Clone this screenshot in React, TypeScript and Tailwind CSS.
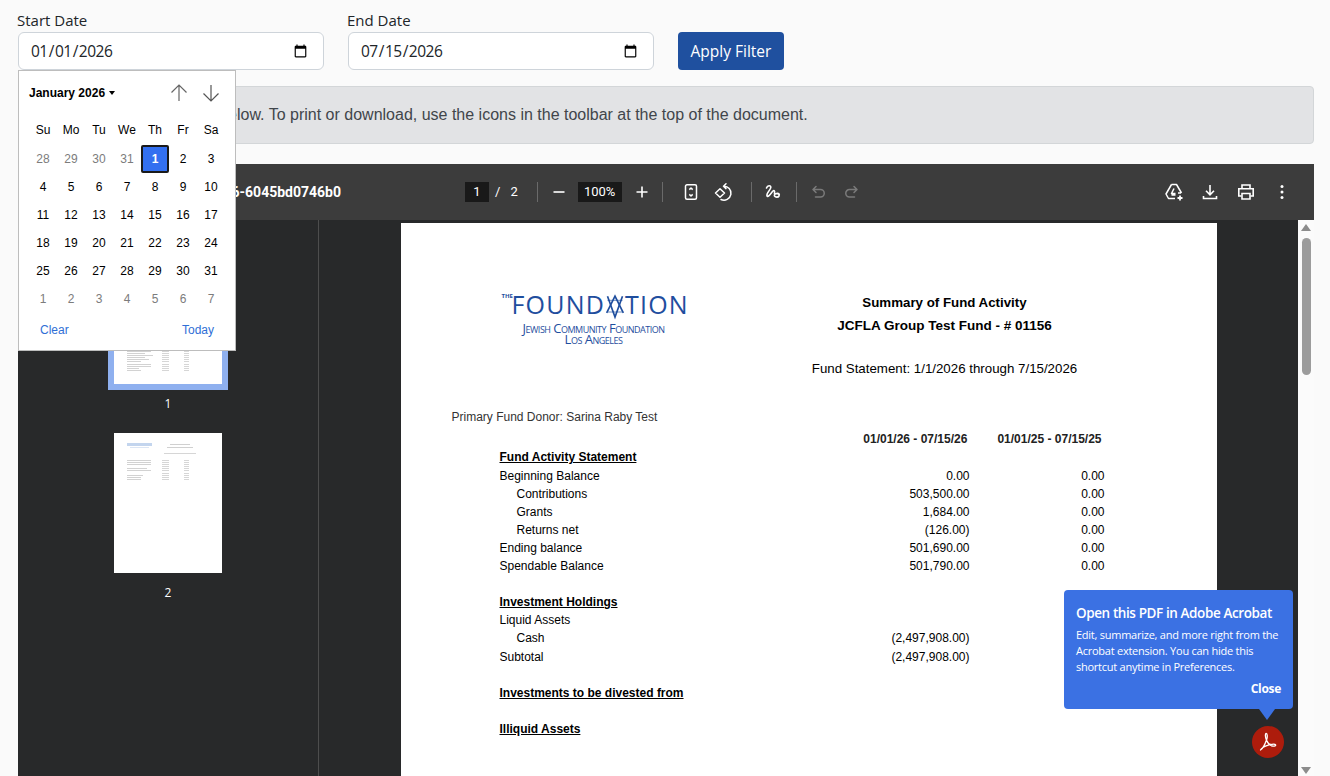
const weeks = [
  ["28", "29", "30", "31", "1", "2", "3"],
  ["4", "5", "6", "7", "8", "9", "10"],
  ["11", "12", "13", "14", "15", "16", "17"],
  ["18", "19", "20", "21", "22", "23", "24"],
  ["25", "26", "27", "28", "29", "30", "31"],
  ["1", "2", "3", "4", "5", "6", "7"],
];

const rows = [
  { label: "Fund Activity Statement", head: true },
  { label: "Beginning Balance", a: "0.00", b: "0.00" },
  { label: "Contributions", a: "503,500.00", b: "0.00", sub: true },
  { label: "Grants", a: "1,684.00", b: "0.00", sub: true },
  { label: "Returns net", a: "(126.00)", b: "0.00", sub: true },
  { label: "Ending balance", a: "501,690.00", b: "0.00" },
  { label: "Spendable Balance", a: "501,790.00", b: "0.00" },
  { label: "" },
  { label: "Investment Holdings", head: true },
  { label: "Liquid Assets" },
  { label: "Cash", a: "(2,497,908.00)", sub: true },
  { label: "Subtotal", a: "(2,497,908.00)" },
  { label: "" },
  { label: "Investments to be divested from", head: true },
  { label: "" },
  { label: "Illiquid Assets", head: true },
];

const ToolbarDivider = () => <div className="w-px h-5 bg-[#6a6a6a]" />;

const Calendar = () => (
  <div className="absolute left-0 top-[58px] z-20 w-[218px] h-[281px] bg-white border border-[#bdbdbd] font-['Liberation_Sans',sans-serif] text-black">
    <div className="flex items-center h-[44px] pl-[10px] pr-[14px]">
      <span className="text-xs font-bold">January 2026</span>
      <span className="ml-1 w-0 h-0 border-x-[3.5px] border-x-transparent border-t-[4px] border-t-black" />
      <svg viewBox="0 0 20 20" className="w-5 h-5 ml-auto text-[#666]" fill="none" stroke="currentColor" strokeWidth="1.2">
        <path d="M10 18V2M2.5 9.5 10 2l7.5 7.5" />
      </svg>
      <svg viewBox="0 0 20 20" className="w-5 h-5 ml-3 text-[#555]" fill="none" stroke="currentColor" strokeWidth="1.2">
        <path d="M10 2v16M2.5 10.5 10 18l7.5-7.5" />
      </svg>
    </div>
    <div className="grid grid-cols-7 w-[196px] ml-[10px] text-xs text-center">
      {["Su", "Mo", "Tu", "We", "Th", "Fr", "Sa"].map((d) => (
        <div key={d} className="h-[30px] flex items-center justify-center">
          {d}
        </div>
      ))}
      {weeks.map((week, w) =>
        week.map((d, i) => {
          const muted = (w === 0 && i < 4) || w === 5;
          const selected = w === 0 && i === 4;
          return (
            <div
              key={w + "-" + i}
              className={
                "h-[28px] flex items-center justify-center " +
                (selected
                  ? "bg-[#3370f0] border-2 border-[#1a1a1a] rounded-[2px] text-white font-bold"
                  : muted
                    ? "text-[#7c7c7c]"
                    : "")
              }
            >
              {d}
            </div>
          );
        }),
      )}
    </div>
    <div className="flex justify-between px-[21px] mt-[9px] text-xs text-[#2f6fd6]">
      <span>Clear</span>
      <span>Today</span>
    </div>
  </div>
);

const ThumbRow = ({ w = 26 }: { w?: number }) => (
  <div className="flex h-[1px] mb-[1.1px] ml-[13px]">
    <div style={{ width: w }} className="bg-[#d2d2d2]" />
    <div style={{ marginLeft: 35 - w }} className="w-[7px] bg-[#d6d6d6]" />
    <div className="ml-[15px] w-[5px] bg-[#d6d6d6]" />
  </div>
);

const Sidebar = () => (
  <div className="w-[301px] shrink-0 border-r border-[#4d4d4d] flex flex-col items-center pt-[18px] text-xs text-white">
    <div className="border-[6px] border-[#8fb0ef]">
      <div className="w-[108px] h-[140px] bg-white pt-[107px]">
        {[24, 18, 26, 18, 22, 14, 24, 24, 12, 14].map((w, i) => (
          <ThumbRow key={i} w={w} />
        ))}
      </div>
    </div>
    <div className="h-[27px] flex items-center">1</div>
    <div className="mt-[10px] border-[6px] border-transparent">
      <div className="w-[108px] h-[140px] bg-white pt-[10px]">
        <div className="flex ml-[13px]">
          <div className="w-[25px]">
            <div className="h-[3px] bg-[#c3d5ee]" />
            <div className="h-[1px] mt-[1px] mx-[3px] bg-[#dbe5f4]" />
          </div>
          <div className="ml-[15px] w-[26px] mt-[1px]">
            <div className="h-[1px] mx-[3px] bg-[#d0d0d0]" />
            <div className="h-[1px] mt-[2px] bg-[#d0d0d0]" />
            <div className="h-[1px] mt-[5px] -mr-[3px] -ml-[3px] bg-[#d6d6d6]" />
          </div>
        </div>
        <div className="mt-[6px]">
          {[24, 24, 24, 0, 20, 24, 0, 16, 14, 14].map((w, i) => (
            <ThumbRow key={i} w={w} />
          ))}
        </div>
      </div>
    </div>
    <div className="h-[27px] flex items-center">2</div>
  </div>
);

const Statement = () => (
  <div className="w-[816px] h-[640px] shrink-0 bg-white mt-[3px] pt-[70px] font-['Liberation_Sans',sans-serif] text-black">
    <div className="flex pl-[100px]">
      <div className="w-[186px] text-[#1f4e9e] font-['Open_Sans',sans-serif]">
        <div className="relative flex items-center h-[26px] -mt-[2px] text-[25px] leading-none tracking-[1.2px]">
          <span className="absolute left-[1px] top-[2px] text-[6px] font-bold tracking-normal">THE</span>
          <span className="ml-[11px]">FOUND</span>
          <svg viewBox="0 0 24 28" className="w-[20px] h-[26px] shrink-0 mt-[5px]" fill="none" stroke="currentColor" strokeWidth="2">
            <path d="M3 1 12 26 21 1" />
            <path d="M2 21 12 1l10 20" />
            <path d="M3 6h18M3 20h18" strokeWidth="0.8" />
          </svg>
          <span>TION</span>
        </div>
        <div className="text-center text-[13px] leading-[12px] mt-[5px] tracking-[-0.5px] whitespace-nowrap [font-variant:small-caps]">Jewish Community Foundation</div>
        <div className="text-center text-[13px] leading-[11px] tracking-[-0.5px] [font-variant:small-caps]">Los Angeles</div>
      </div>
      <div className="ml-[124px] pt-[1px] w-[268px] text-center">
        <div className="font-bold h-[23px] leading-[18px] text-[13.3px]">Summary of Fund Activity</div>
        <div className="font-bold h-[23px] leading-[18px] text-[13.5px]">JCFLA Group Test Fund - # 01156</div>
        <div className="mt-[20px] leading-[18px] text-[13.3px] whitespace-nowrap">Fund Statement: 1/1/2026 through 7/15/2026</div>
      </div>
    </div>
    <div className="ml-[51px] mt-[30px] text-xs leading-[18px] text-[#333]">Primary Fund Donor: Sarina Raby Test</div>
    <div className="ml-[99px] w-[605px] text-xs mt-[3.4px]">
      <div className="flex justify-end font-bold leading-[20px] text-[#222] h-[19px] pr-[3px]">
        <span>01/01/26 - 07/15/26</span>
        <span className="ml-[30px]">01/01/25 - 07/15/25</span>
      </div>
      {rows.map((r, i) => (
        <div key={i} className="flex h-[18.115px] leading-[18px]">
          <div className={"flex-1 " + (r.sub ? "pl-[17px] " : "") + (r.head ? "font-bold underline" : "")}>{r.label}</div>
          <div className="w-[135px] text-right">{r.a}</div>
          <div className="w-[135px] text-right">{r.b}</div>
        </div>
      ))}
    </div>
  </div>
);

const PdfToolbar = () => (
  <div className="h-14 shrink-0 bg-[#3c3c3c] flex items-center text-white font-['Roboto',sans-serif] text-[13px]">
    <div className="w-[447px] text-sm font-bold text-right pr-[124px] whitespace-nowrap">6-6045bd0746b0</div>
    <div className="w-6 h-5 bg-[#191919] flex items-center justify-center">1</div>
    <span className="ml-[6px]">/</span>
    <span className="ml-[10px]">2</span>
    <div className="ml-[19px]"><ToolbarDivider /></div>
    <svg viewBox="0 0 20 20" className="ml-[11px] w-5 h-5" fill="none" stroke="currentColor" strokeWidth="1.6"><path d="M4.5 10h11" /></svg>
    <div className="ml-[9px] w-11 h-5 bg-[#191919] flex items-center justify-center">100%</div>
    <svg viewBox="0 0 20 20" className="ml-[10px] w-5 h-5" fill="none" stroke="currentColor" strokeWidth="1.6"><path d="M4.5 10h11M10 4.5v11" /></svg>
    <div className="ml-[10px]"><ToolbarDivider /></div>
    <svg viewBox="0 0 20 20" className="ml-[18px] w-5 h-5" fill="none" stroke="currentColor" strokeWidth="1.5" strokeLinejoin="round">
      <rect x="4.5" y="2.8" width="11" height="14.4" rx="1.5" />
      <path d="M8.3 7.6 10 6l1.7 1.6M8.3 12.4 10 14l1.7-1.6" />
    </svg>
    <svg viewBox="0 0 20 20" className="ml-[12px] w-5 h-5" fill="none" stroke="currentColor" strokeWidth="1.5" strokeLinejoin="round" strokeLinecap="round">
      <path d="M2.5 11 7 6.800 11.500 11 7 15.200z" />
      <path d="M10.500 4.200a7 7 0 1 1-2.500 13.300M13 1.800l-2.500 2.400 2.500 2.400" />
    </svg>
    <div className="ml-[18px]"><ToolbarDivider /></div>
    <svg viewBox="0 0 20 20" className="ml-[11px] w-5 h-5" fill="none" stroke="currentColor" strokeWidth="1.6" strokeLinejoin="round" strokeLinecap="round">
      <path d="M3.500 6c1-3 4.500-3 4.300-.5-.2 2.500-4.800 5.500-3.800 8.500 1 2 4-3 6-5 1.200-1 2 0 1.500 2-.3 1.500 1 1.300 2 .5 1.700-.8 3.500.5 2.500 2.500-.8 1.500-3.500 1.500-4.500 0-.5-1 .5-2.500 2-2.500 1 0 2 .5 2.500 1" />
    </svg>
    <div className="ml-[13px]"><ToolbarDivider /></div>
    <svg viewBox="0 0 20 20" className="ml-[12px] w-5 h-5 text-[#7a7a7a]" fill="none" stroke="currentColor" strokeWidth="1.5" strokeLinejoin="round" strokeLinecap="round">
      <path d="M7 4.500 4 7.500l3 3M4.500 7.500h7a3.500 3.500 0 0 1 0 7.500H6.500" />
    </svg>
    <svg viewBox="0 0 20 20" className="ml-[12px] w-5 h-5 text-[#7a7a7a]" fill="none" stroke="currentColor" strokeWidth="1.5" strokeLinejoin="round" strokeLinecap="round">
      <path d="M13 4.500l3 3-3 3M15.500 7.500h-7a3.500 3.500 0 0 0 0 7.500h5" />
    </svg>
    <div className="ml-auto flex items-center gap-4 pr-[22px]">
      <svg viewBox="0 0 20 20" className="w-5 h-5" fill="none" stroke="currentColor" strokeWidth="1.5" strokeLinejoin="round">
        <path d="M7.500 2.500h5l5 8.500M7.500 2.500 2 12l2.500 4.500H11M17 11h-3" />
        <path d="M7.500 13h4M10 6.500 7.500 11.500h4" />
        <path d="M16 13.500v5M13.500 16h5" strokeWidth="1.8" />
      </svg>
      <svg viewBox="0 0 20 20" className="w-5 h-5" fill="none" stroke="currentColor" strokeWidth="1.600">
        <path d="M10 3v9.500M6 8.800l4 4 4-4M3.500 14v2.500h13V14" />
      </svg>
      <svg viewBox="0 0 20 20" className="w-5 h-5" fill="none" stroke="currentColor" strokeWidth="1.600">
        <path d="M6 6.500V3h8v3.500M5.500 14H2.800V6.800h14.400V14h-2.700" />
        <path d="M6 11.500h8v5.500H6z" />
      </svg>
      <svg viewBox="0 0 20 20" className="w-5 h-5" fill="currentColor">
        <circle cx="10" cy="4.500" r="1.500" />
        <circle cx="10" cy="10" r="1.500" />
        <circle cx="10" cy="15.500" r="1.500" />
      </svg>
    </div>
  </div>
);

const Scrollbar = () => (
  <div className="w-[16px] shrink-0 bg-[#fbfbfb] flex flex-col items-center pt-[4px]">
    <span className="w-0 h-0 border-x-[5px] border-x-transparent border-b-[7px] border-b-[#8c8c8c]" />
    <div className="w-[9px] h-[137px] mt-[7px] bg-[#9c9c9c] rounded-full" />
    <span className="mt-auto mb-[2px] w-0 h-0 border-x-[5px] border-x-transparent border-t-[7px] border-t-[#8c8c8c]" />
  </div>
);

const AcrobatPrompt = () => (
  <div className="absolute right-[37px] top-[590px] z-10 flex flex-col items-center font-['Open_Sans',sans-serif] text-white">
    <div className="relative w-[229px] h-[119px] rounded bg-[#3b71e3] pl-3 pr-3 pt-[14px]">
      <div className="text-[13.5px] font-semibold leading-[18px] tracking-[-0.4px] whitespace-nowrap">Open this PDF in Adobe Acrobat</div>
      <div className="text-[11px] leading-4 mt-[5px] tracking-[-0.25px] whitespace-nowrap">
        Edit, summarize, and more right from the
        <br />
        Acrobat extension. You can hide this
        <br />
        shortcut anytime in Preferences.
      </div>
      <div className="text-right text-xs font-bold mt-[6px] tracking-[-0.3px]">Close</div>
      <span className="absolute left-[195px] top-full w-0 h-0 border-x-[8px] border-x-transparent border-t-[11px] border-t-[#3b71e3]" />
    </div>
    <div className="self-end mr-[9px] mt-[17px] w-8 h-8 rounded-full bg-[#ad1c0c] flex items-center justify-center">
      <svg viewBox="0 0 24 24" className="w-6 h-6" fill="none" stroke="#fff" strokeWidth="1.300" strokeLinejoin="round">
        <path d="M4.500 20c1.800-1 4.300-5.200 6.200-10.500.9-2.500.7-6-.5-6s-1 3.700.3 6.800c1.300 3 3.800 5.300 6.300 5.800 1.800.3 3.200-.3 2.800-1.200-.5-1-4-.8-7.300.2-3.400 1-6.800 3-7.800 4.900z" />
      </svg>
    </div>
  </div>
);

const DateField = ({ label, value }: { label: string; value: string }) => (
  <div className="w-[306px]">
    <label className="block text-[15px] leading-[24px] h-[24px] -ml-[1px] -mt-[4px] text-[#212529]">{label}</label>
    <input
      type="date"
      defaultValue={value}
      className="w-full h-[38px] bg-white border border-[#ced4da] rounded-md pl-[11px] pr-[13px] pt-[2px] text-[15.500px] tracking-[-0.5px] text-[#212529]"
    />
  </div>
);

export default function App() {
  return (
    <div className="relative h-[776px] overflow-hidden bg-[#fafafa] pl-[18px] pr-4 pt-3 font-['Open_Sans',sans-serif]">
      <div className="relative flex items-end gap-6">
        <DateField label="Start Date" value="2026-01-01" />
        <DateField label="End Date" value="2026-07-15" />
        <button className="h-[38px] px-[12.500px] pt-[2px] bg-[#1f509f] text-white rounded text-[15.500px]">Apply Filter</button>
        <Calendar />
      </div>

      <div className="mt-4 h-[58px] flex items-center pl-[22px] bg-[#e2e3e5] border border-[#d3d6d8] rounded text-[#41464b] font-['Liberation_Sans',sans-serif]">
        Your statement is shown below. To print or download, use the icons in the toolbar at the top of the document.
      </div>

      <div className="mt-5 h-[612px] flex flex-col overflow-hidden">
        <PdfToolbar />
        <div className="flex flex-1 min-h-0 bg-[#28292a]">
          <Sidebar />
          <div className="flex-1 flex justify-center overflow-hidden">
            <Statement />
          </div>
          <Scrollbar />
        </div>
      </div>

      <AcrobatPrompt />
    </div>
  );
}
